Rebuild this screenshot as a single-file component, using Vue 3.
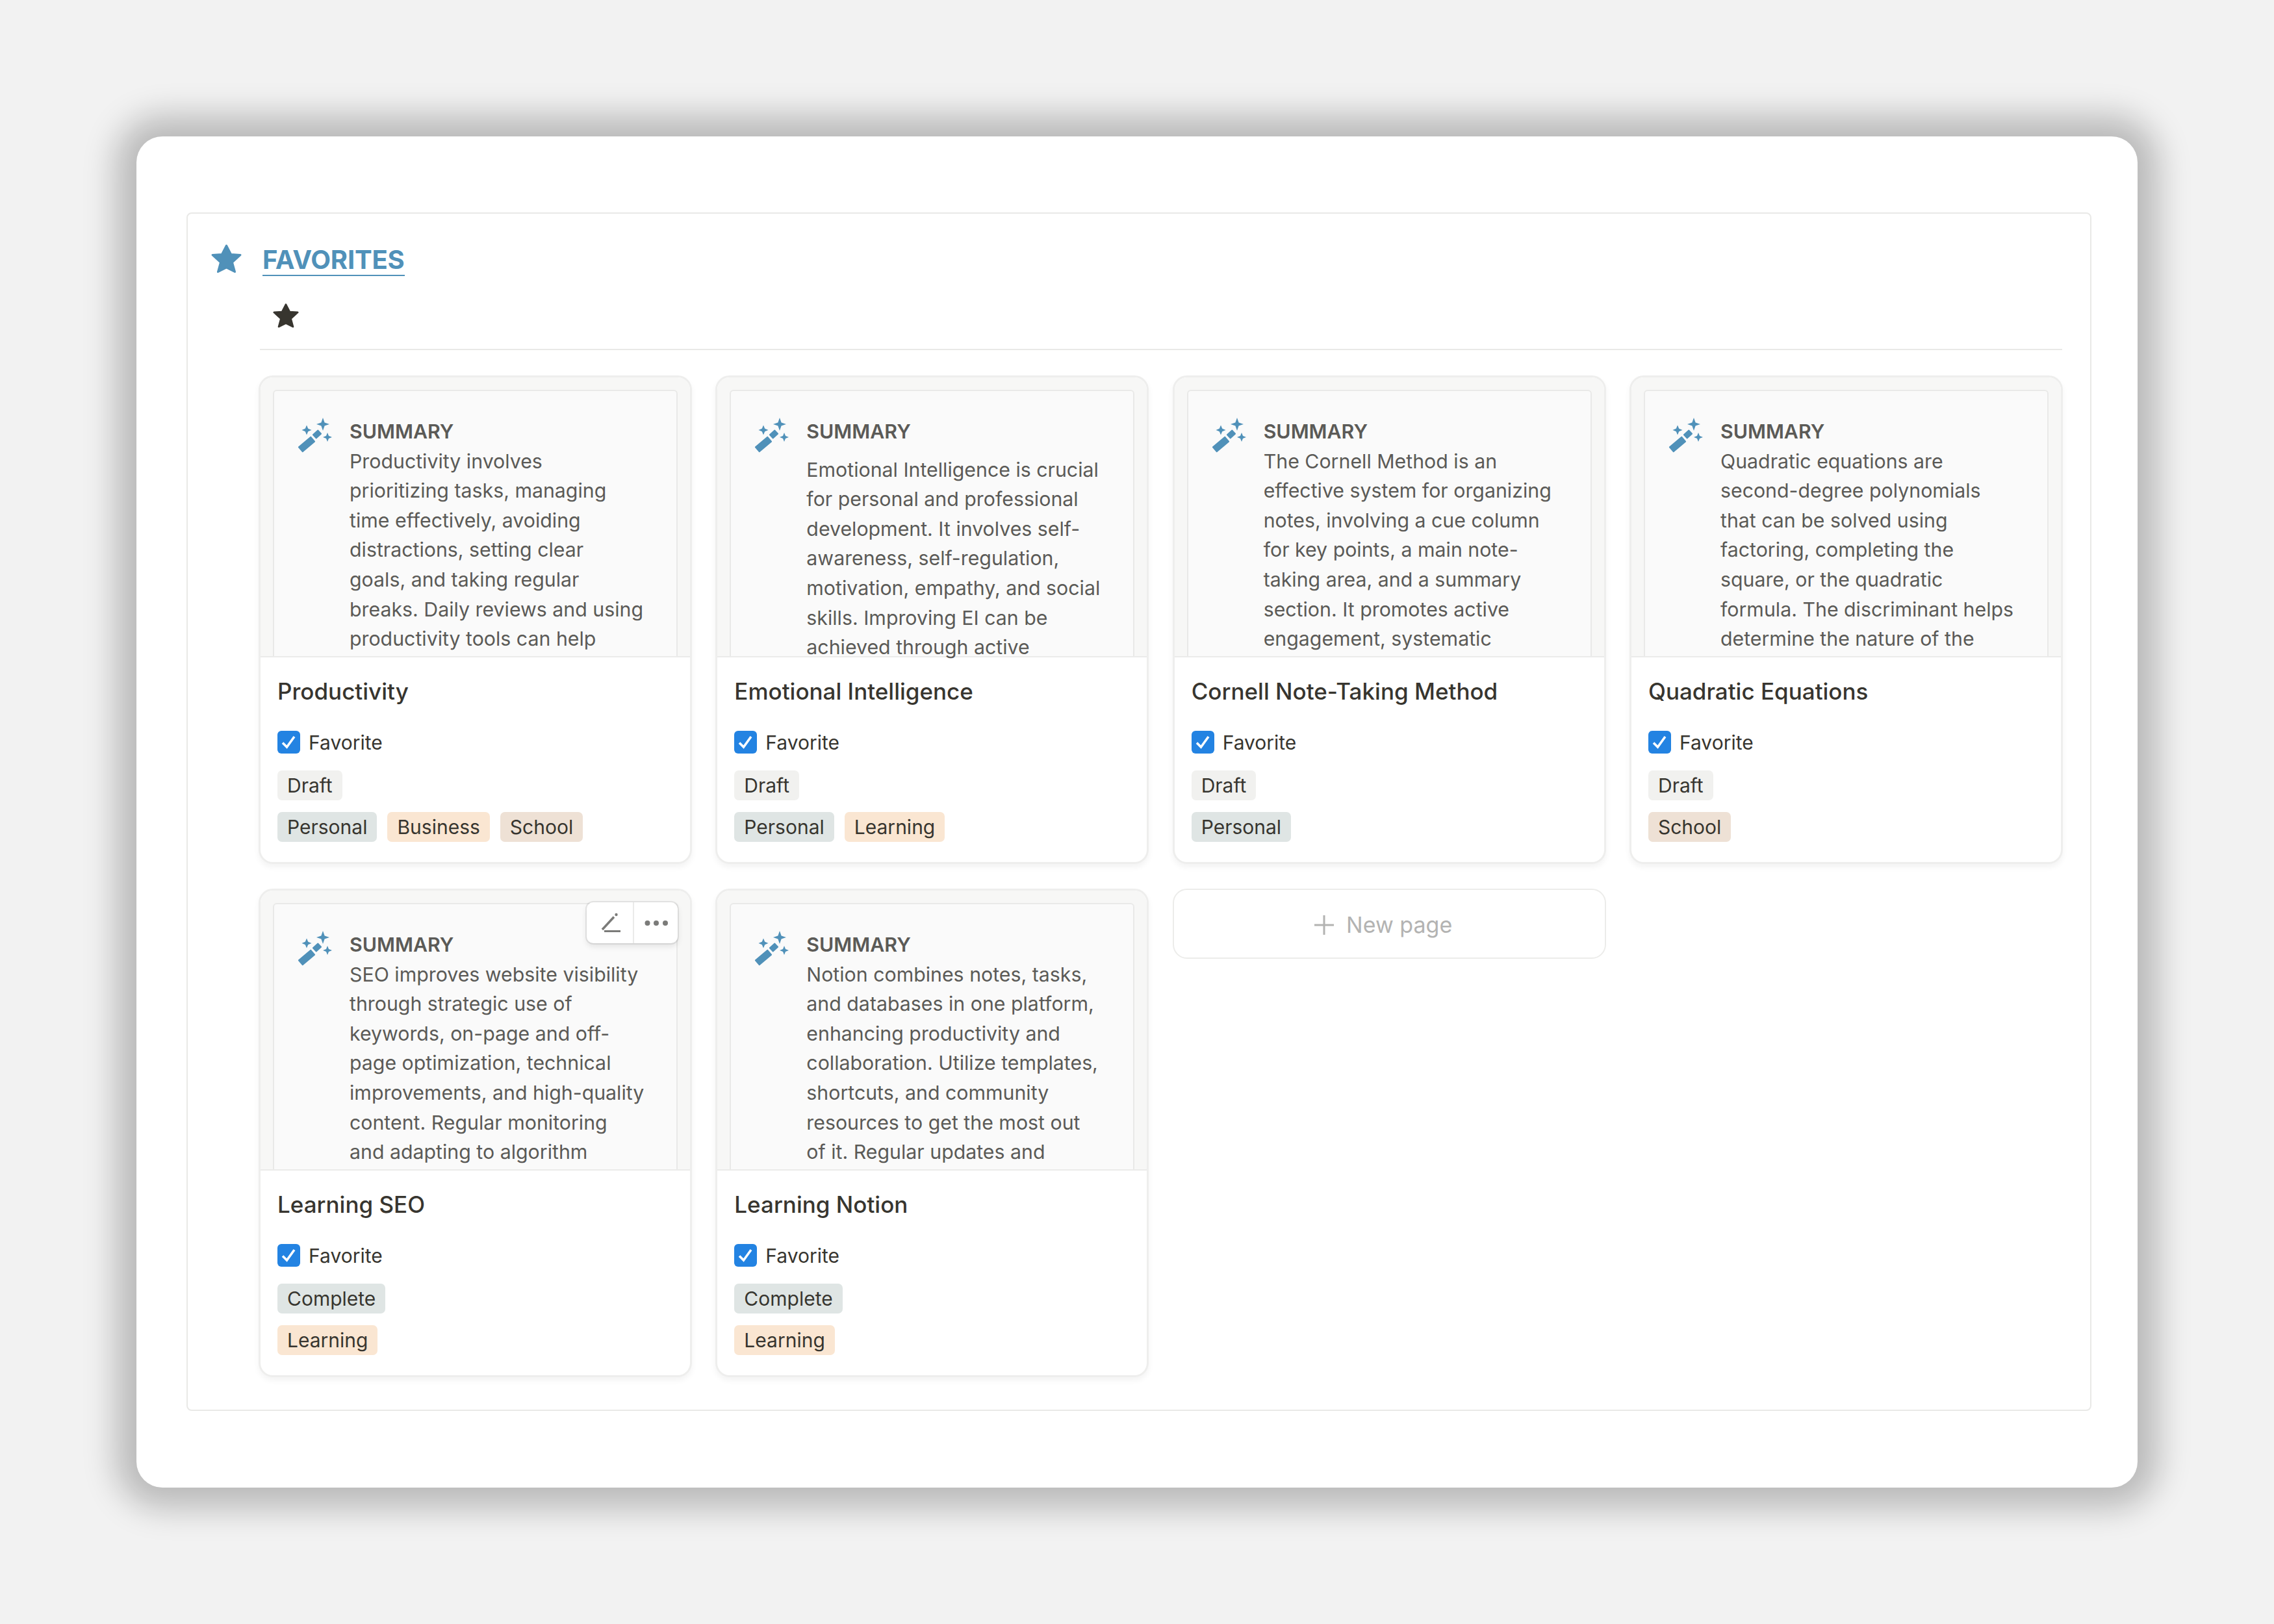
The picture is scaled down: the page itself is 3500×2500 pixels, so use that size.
<script setup>
const cards = [
  { title: 'Productivity', status: 'Draft', tags: ['Personal', 'Business', 'School'], lines: ['Productivity involves', 'prioritizing tasks, managing', 'time effectively, avoiding', 'distractions, setting clear', 'goals, and taking regular', 'breaks. Daily reviews and using', 'productivity tools can help'] },
  { title: 'Emotional Intelligence', status: 'Draft', tags: ['Personal', 'Learning'], spaced: true, lines: ['Emotional Intelligence is crucial', 'for personal and professional', 'development. It involves self-', 'awareness, self-regulation,', 'motivation, empathy, and social', 'skills. Improving EI can be', 'achieved through active'] },
  { title: 'Cornell Note-Taking Method', status: 'Draft', tags: ['Personal'], lines: ['The Cornell Method is an', 'effective system for organizing', 'notes, involving a cue column', 'for key points, a main note-', 'taking area, and a summary', 'section. It promotes active', 'engagement, systematic'] },
  { title: 'Quadratic Equations', status: 'Draft', tags: ['School'], lines: ['Quadratic equations are', 'second-degree polynomials', 'that can be solved using', 'factoring, completing the', 'square, or the quadratic', 'formula. The discriminant helps', 'determine the nature of the'] },
  { title: 'Learning SEO', status: 'Complete', tags: ['Learning'], hover: true, lines: ['SEO improves website visibility', 'through strategic use of', 'keywords, on-page and off-', 'page optimization, technical', 'improvements, and high-quality', 'content. Regular monitoring', 'and adapting to algorithm'] },
  { title: 'Learning Notion', status: 'Complete', tags: ['Learning'], lines: ['Notion combines notes, tasks,', 'and databases in one platform,', 'enhancing productivity and', 'collaboration. Utilize templates,', 'shortcuts, and community', 'resources to get the most out', 'of it. Regular updates and'] },
]
const starPath = 'M24.500 3 L31.500 16.500 L46 17.500 L33.500 29 L37.500 43.500 L24.500 37 L11.500 43.500 L15.500 29 L3 17.500 L17.500 16.500 Z'
</script>

<template>
  <div class="page">
    <div class="window">
      <section class="box">
        <div class="heading">
          <svg class="head-star" viewBox="0 0 49 47"><path :d="starPath" fill="#5091b9" stroke="#5091b9" stroke-width="3" stroke-linejoin="round" /></svg>
          <span class="head-title">FAVORITES</span>
        </div>
        <div class="content">
          <div class="tabs">
            <svg class="tab-star" viewBox="0 0 49 47"><path :d="starPath" fill="#37352f" stroke="#37352f" stroke-width="3" stroke-linejoin="round" /></svg>
          </div>
          <div class="grid">
            <article v-for="card in cards" :key="card.title" class="card">
              <div class="cover">
                <div class="sheet">
                  <svg class="wand" viewBox="0 0 60 60" fill="#5091b9">
                    <path d="M41 3 L43.600 10.400 L51 13 L43.600 15.600 L41 23 L38.400 15.600 L31 13 L38.400 10.400 Z" />
                    <path d="M16 14.500 L18.200 19.800 L23.500 22 L18.200 24.200 L16 29.500 L13.800 24.200 L8.500 22 L13.800 19.800 Z" />
                    <path d="M48 26 L50 31 L55 33 L50 35 L48 40 L46 35 L41 33 L46 31 Z" />
                    <rect x="26" y="24" width="12" height="9" rx="1" transform="rotate(-42 32 28.500)" />
                    <rect x="3" y="38.500" width="26" height="11" rx="1" transform="rotate(-40 16 44)" />
                  </svg>
                  <div class="summary">
                    <div class="summary-label">SUMMARY</div>
                    <div class="summary-text" :class="{ spaced: card.spaced }">
                      <div v-for="line in card.lines" :key="line">{{ line }}</div>
                    </div>
                  </div>
                </div>
                <div v-if="card.hover" class="toolbar">
                  <button class="tool tool-edit" type="button" aria-label="Edit">
                    <svg viewBox="0 0 36 36" width="36" height="36" fill="none" stroke="#7b7b79" stroke-width="3.500">
                      <path d="M6 28 L24 8.500" />
                      <path d="M9 30.500 L34 30.500" stroke-width="3" />
                      <circle cx="27.500" cy="5" r="2.200" fill="#7b7b79" stroke="none" />
                    </svg>
                  </button>
                  <button class="tool tool-more" type="button" aria-label="More">
                    <svg viewBox="0 0 36 12" width="36" height="12" fill="#7b7b79">
                      <circle cx="4.500" cy="6" r="4" /><circle cx="18" cy="6" r="4" /><circle cx="32" cy="6" r="4" />
                    </svg>
                  </button>
                </div>
              </div>
              <div class="body">
                <div class="title">{{ card.title }}</div>
                <div class="fav">
                  <span class="check">
                    <svg viewBox="0 0 35 35" width="35" height="35" fill="none" stroke="#fff" stroke-width="3.600"><path d="M8 18.500 L14.500 25 L26 9" /></svg>
                  </span>
                  <span>Favorite</span>
                </div>
                <div class="chips">
                  <span class="chip" :class="'c-' + card.status.toLowerCase()">{{ card.status }}</span>
                </div>
                <div class="chips">
                  <span v-for="tag in card.tags" :key="tag" class="chip" :class="'c-' + tag.toLowerCase()">{{ tag }}</span>
                </div>
              </div>
            </article>
            <div class="new-page">
              <svg viewBox="0 0 30 30" width="30" height="30" stroke="#b3b3b2" stroke-width="3"><path d="M15 0 V30 M0 15 H30" /></svg>
              <span>New page</span>
            </div>
          </div>
        </div>
      </section>
    </div>
  </div>
</template>

<style scoped>
.page {
  width: 3500px;
  height: 2500px;
  box-sizing: border-box;
  padding: 210px;
  background: #f2f2f2;
  font-family: Inter, "Liberation Sans", sans-serif;
}
.window {
  box-sizing: border-box;
  height: 2080px;
  padding: 117px 71px 0 77px;
  background: #fff;
  border-radius: 40px;
  box-shadow: 0 0 50px 32px rgba(0, 0, 0, 0.23);
}
.box {
  box-sizing: border-box;
  height: 1845px;
  padding: 47px 43px 0 35px;
  border: 2px solid #e9e9e7;
  border-radius: 8px;
}
.heading {
  display: flex;
  align-items: center;
  gap: 31px;
  height: 50px;
}
.head-star {
  width: 49px;
  height: 47px;
  margin-bottom: 6px;
}
.head-title {
  font-size: 40px;
  line-height: 46px;
  font-weight: 700;
  color: #5091b9;
  border-bottom: 2px solid #5091b9;
  letter-spacing: -0.2px;
}
.content {
  margin: 40px 0 0 74px;
}
.tabs {
  height: 40px;
  padding: 0 0 31px 19px;
  margin-left: 2px;
  border-bottom: 2px solid #e9e9e7;
}
.tab-star {
  display: block;
  width: 42px;
  height: 40px;
}
.grid {
  display: grid;
  grid-template-columns: repeat(4, 667px);
  grid-auto-rows: min-content;
  gap: 38px 36.33px;
  margin-top: 39px;
}
.card {
  box-sizing: border-box;
  height: 752px;
  border: 3px solid #eeeeed;
  border-radius: 22px;
  background: #fff;
  box-shadow: 0 5px 10px rgba(15, 15, 15, 0.05);
  overflow: hidden;
}
.card:has(.toolbar) {
  overflow: visible;
}
.cover {
  position: relative;
  box-sizing: border-box;
  height: 431px;
  padding: 19px 19px 0;
  background: #f7f7f6;
  border-bottom: 2px solid #ebebea;
  border-radius: 19px 19px 0 0;
}
.sheet {
  box-sizing: border-box;
  display: flex;
  height: 410px;
  padding: 40px 0 0 34px;
  gap: 22px;
  background: #fafafa;
  border: 2px solid #e9e9e8;
  border-bottom: 0;
  border-radius: 6px 6px 0 0;
}
.wand {
  flex: none;
  width: 60px;
  height: 60px;
  margin-top: -2px;
}
.summary {
  white-space: nowrap;
  color: #5b5a57;
  font-size: 30.300px;
  line-height: 45.600px;
}
.summary-label {
  font-weight: 600;
}
.spaced {
  margin-top: 13px;
}
.toolbar {
  position: absolute;
  top: 18px;
  right: 19px;
  display: flex;
  width: 140px;
  height: 63px;
  background: #fff;
  border-radius: 10px;
  box-shadow: 0 0 0 2px rgba(15, 15, 15, 0.08), 0 5px 10px rgba(15, 15, 15, 0.1);
}
.tool {
  display: flex;
  align-items: center;
  justify-content: center;
  padding: 0;
  border: 0;
  background: transparent;
}
.tool-edit {
  width: 73px;
  border-right: 2px solid #ebebea;
}
.tool-more {
  flex: 1;
}
.body {
  padding: 29px 0 0 26px;
  color: #37352f;
}
.title {
  font-size: 35px;
  line-height: 46px;
  font-weight: 500;
}
.fav {
  display: flex;
  align-items: center;
  gap: 13px;
  height: 35px;
  margin-top: 38px;
  font-size: 30px;
}
.check {
  width: 35px;
  height: 35px;
  background: #2383e2;
  border-radius: 6px;
}
.check svg {
  display: block;
}
.chips {
  display: flex;
  gap: 16px;
  margin-top: 18px;
}
.fav + .chips {
  margin-top: 26px;
}
.chip {
  height: 46px;
  padding: 0 15px;
  border-radius: 7px;
  font-size: 30px;
  line-height: 46px;
}
.c-draft { background: #f1f1ef; }
.c-complete { background: #dfe5e4; }
.c-personal { background: #dfe5e4; }
.c-business, .c-learning { background: #fae6d2; }
.c-school { background: #eee1d5; }
.new-page {
  box-sizing: border-box;
  display: flex;
  align-items: center;
  justify-content: center;
  gap: 19px;
  height: 108px;
  padding: 3px 18px 0 0;
  border: 2px solid #ececea;
  border-radius: 22px;
  color: #b3b3b2;
  font-size: 34px;
}
</style>
